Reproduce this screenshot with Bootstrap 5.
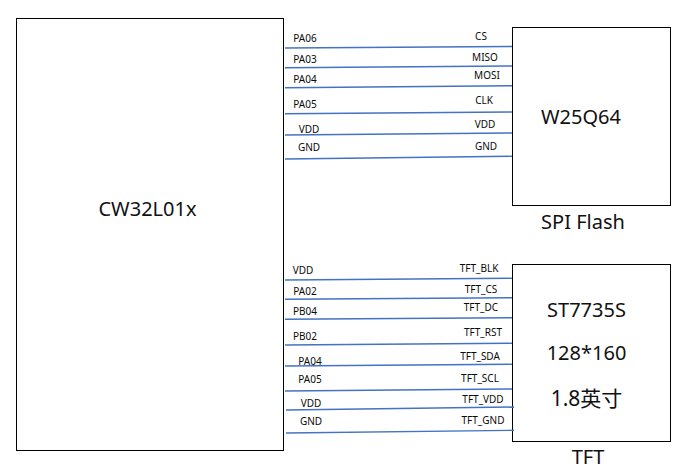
<!DOCTYPE html>
<html lang="zh">
<head>
<meta charset="utf-8">
<title>CW32L01x wiring</title>
<link href="https://cdn.jsdelivr.net/npm/bootstrap@5.3.0/dist/css/bootstrap.min.css" rel="stylesheet">
<style>
html,body{margin:0;background:#fff;overflow:hidden}
.sheet{position:relative;width:686px;height:469px;font-family:"Noto Sans","Noto Sans CJK SC",sans-serif;color:#111;overflow:hidden}
.wires{position:absolute;left:0;top:0}
.wires line{stroke:#4472c4;stroke-width:1.4}
.chip{position:absolute;border:1px solid #000;background:#fff}
.chip-mcu{left:16px;top:18px;width:268px;height:433px}
.chip-flash{left:512px;top:27px;width:159px;height:179px}
.chip-tft{left:512px;top:264px;width:159px;height:178px}
.big{position:absolute;font-size:20px;line-height:24px;white-space:nowrap;transform:translateX(-50%)}
.big-size{font-size:21px}
.pin{position:absolute;font-size:10px;line-height:14px;white-space:nowrap;transform:translateX(-50%);color:#0a0a0a}
</style>
</head>
<body>
<div class="sheet">
  <div class="chip chip-mcu"></div>
  <div class="chip chip-flash"></div>
  <div class="chip chip-tft"></div>
  <svg class="wires" width="686" height="469" aria-hidden="true">
    <line x1="285" y1="48" x2="512" y2="46.5"/>
    <line x1="285" y1="67.7" x2="512" y2="66"/>
    <line x1="285" y1="87.7" x2="512" y2="85.7"/>
    <line x1="285" y1="113.7" x2="512" y2="112"/>
    <line x1="285" y1="135" x2="512" y2="133"/>
    <line x1="285" y1="159" x2="512" y2="156.3"/>
    <line x1="285" y1="280" x2="512" y2="278.3"/>
    <line x1="285" y1="299.3" x2="512" y2="297.7"/>
    <line x1="285" y1="319.3" x2="512" y2="317.7"/>
    <line x1="285" y1="345" x2="512" y2="343.3"/>
    <line x1="285" y1="366" x2="512" y2="364.3"/>
    <line x1="285" y1="391" x2="512" y2="389"/>
    <line x1="286" y1="410" x2="514" y2="407"/>
    <line x1="286" y1="433" x2="514" y2="430.3"/>
  </svg>

  <div class="big" style="left:147.5px;top:197px">CW32L01x</div>
  <div class="big" style="left:581px;top:105px">W25Q64</div>
  <div class="big" style="left:583px;top:210px">SPI Flash</div>
  <div class="big" style="left:586.5px;top:298px">ST7735S</div>
  <div class="big" style="left:586.5px;top:341px">128*160</div>
  <div class="big big-size" style="left:586.5px;top:386px">1.8英寸</div>
  <div class="big" style="left:588px;top:445px">TFT</div>

  <div class="pin" style="left:305px;top:31px">PA06</div>
  <div class="pin" style="left:305px;top:52px">PA03</div>
  <div class="pin" style="left:305px;top:72px">PA04</div>
  <div class="pin" style="left:305px;top:97px">PA05</div>
  <div class="pin" style="left:309px;top:122px">VDD</div>
  <div class="pin" style="left:309px;top:140px">GND</div>
  <div class="pin" style="left:481px;top:29px">CS</div>
  <div class="pin" style="left:485px;top:50px">MISO</div>
  <div class="pin" style="left:487px;top:68px">MOSI</div>
  <div class="pin" style="left:484px;top:93px">CLK</div>
  <div class="pin" style="left:485px;top:117px">VDD</div>
  <div class="pin" style="left:486px;top:139px">GND</div>

  <div class="pin" style="left:303px;top:263px">VDD</div>
  <div class="pin" style="left:305px;top:284px">PA02</div>
  <div class="pin" style="left:305px;top:304px">PB04</div>
  <div class="pin" style="left:305px;top:329px">PB02</div>
  <div class="pin" style="left:310px;top:354px">PA04</div>
  <div class="pin" style="left:310px;top:372px">PA05</div>
  <div class="pin" style="left:311px;top:396px">VDD</div>
  <div class="pin" style="left:311px;top:414px">GND</div>
  <div class="pin" style="left:479px;top:261px">TFT_BLK</div>
  <div class="pin" style="left:481px;top:282px">TFT_CS</div>
  <div class="pin" style="left:481px;top:300px">TFT_DC</div>
  <div class="pin" style="left:483px;top:325px">TFT_RST</div>
  <div class="pin" style="left:480px;top:349px">TFT_SDA</div>
  <div class="pin" style="left:480px;top:371px">TFT_SCL</div>
  <div class="pin" style="left:483px;top:392px">TFT_VDD</div>
  <div class="pin" style="left:483px;top:413px">TFT_GND</div>
</div>
<script src="https://cdn.jsdelivr.net/npm/bootstrap@5.3.0/dist/js/bootstrap.bundle.min.js"></script>
</body>
</html>
